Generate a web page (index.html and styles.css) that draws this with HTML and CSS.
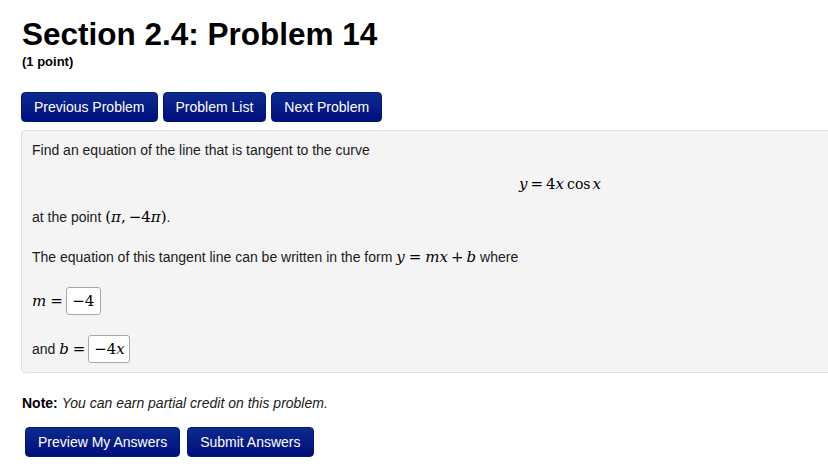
FILE: index.html
```html
<!DOCTYPE html>
<html>
<head>
<meta charset="utf-8">
<link rel="stylesheet" href="styles.css">
</head>
<body>
<div class="page">
  <h1 class="title">Section 2.4: Problem 14</h1>
  <div class="points">(1 point)</div>
  <div class="nav">
    <button class="btn">Previous Problem</button>
    <button class="btn">Problem List</button>
    <button class="btn">Next Problem</button>
  </div>
  <div class="problem">
    <p class="line">Find an equation of the line that is tangent to the curve</p>
    <div class="display"><span class="math"><i>y</i><span class="op">=</span>4<i>x</i><span class="fn">cos</span><i>x</i></span></div>
    <p class="line">at the point <span class="math">(<i>π</i>,<span class="sp"></span>−4<i>π</i>)</span>.</p>
    <p class="line gap">The equation of this tangent line can be written in the form <span class="math"><i>y</i><span class="op">=</span><i>mx</i><span class="bin">+</span><i>b</i></span> where</p>
    <div class="answer first"><span class="math"><i>m</i><span class="op last">=</span></span><span class="input inm"><span class="math">−4</span></span></div>
    <div class="answer"><span>and <span class="math"><i>b</i><span class="op last">=</span></span></span><span class="input inb"><span class="math">−4<i>x</i></span></span></div>
  </div>
  <p class="note"><b>Note:</b> <i>You can earn partial credit on this problem.</i></p>
  <div class="actions">
    <button class="btn big">Preview My Answers</button>
    <button class="btn big">Submit Answers</button>
  </div>
</div>
</body>
</html>
```

FILE: styles.css
```css
html, body {
  margin: 0;
  padding: 0;
  overflow: hidden;
  background: #fff;
}
body {
  font-family: "Liberation Sans", Arial, sans-serif;
  color: #000;
}
.page {
  padding: 0 0 0 21px;
  width: 1100px;
}
.title {
  font-size: 31.5px;
  font-weight: bold;
  line-height: 37px;
  margin: 16px 0 0 1px;
}
.points {
  font-size: 13px;
  font-weight: bold;
  line-height: 15px;
  margin: 1px 0 0 1px;
}
.nav {
  display: flex;
  gap: 5px;
  margin-top: 23px;
}
.btn {
  font-family: "Liberation Sans", Arial, sans-serif;
  font-size: 14px;
  color: #fff;
  background: linear-gradient(#0c2a8e, #000e7e);
  border: 1px solid #011a75;
  border-radius: 4px;
  height: 30px;
  padding: 0 12px;
  line-height: 28px;
  cursor: pointer;
}
.problem {
  margin-top: 8px;
  width: 1056px;
  background: #f4f4f4;
  border: 1px solid #e0e0e0;
  border-radius: 4px;
  padding: 11px 10px 9px 10px;
  font-size: 14px;
  color: #1a1a1a;
}
.line {
  margin: 0;
  line-height: 17px;
}
.math {
  font-family: "DejaVu Serif", "Liberation Serif", serif;
  font-size: 15px;
  line-height: 1;
  color: #000;
}
.op { margin: 0 4px; }
.op.last { margin-right: 3px; }
.bin { margin: 0 3px; }
.fn { margin: 0 2px 0 3px; font-size: 14px; }
.sp { display: inline-block; width: 3px; }
.display {
  text-align: center;
  line-height: 18px;
  margin: 16px 0 16px 0;
}
.display .op { margin: 0 3px; }
.gap { margin-top: 23px; }
.answer {
  display: flex;
  align-items: center;
  gap: 0;
  margin-top: 20px;
  height: 28px;
}
.answer.first { margin-top: 21px; }
.input {
  display: inline-flex;
  align-items: center;
  justify-content: center;
  background: #fff;
  border: 1px solid #a8a8a8;
  border-radius: 3px;
  box-sizing: border-box;
  height: 28px;
}
.inm { width: 35px; }
.inb { width: 42px; }
.input .math { font-size: 15px; }
.note {
  margin: 22px 0 0 1px;
  font-size: 14px;
  line-height: 16px;
  color: #1a1a1a;
}
.note b { color: #000; }
.actions {
  display: flex;
  gap: 7px;
  margin: 16px 0 0 4px;
}
```
